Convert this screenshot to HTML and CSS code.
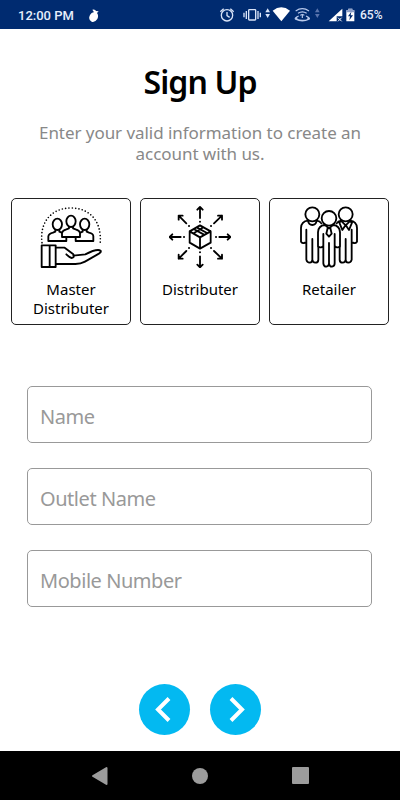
FILE: index.html
```html
<!DOCTYPE html>
<html lang="en">
<head>
    <meta charset="UTF-8">
    <meta name="viewport" content="width=device-width, initial-scale=1.0">
    <title>Sign Up</title>
    <link rel="stylesheet" href="styles.css">
</head>
<body>
<header class="status-bar">
    <span class="time">12:00 PM</span>
    <svg class="app-icon" width="12" height="15" viewBox="264 22 36 45">
        <path d="M270 43q5-9 12-8l-5-8q9-2 11 4l8 1-5 5q6 8 1 18-7 11-17 8-12-6-5-20z" fill="#fff"/>
    </svg>
    <svg class="status-icons" width="143" height="20" viewBox="20 15 429 60">
        <g fill="none" stroke="#d9e4f8" stroke-width="4">
            <circle cx="50" cy="46" r="17"/>
            <path d="M50 36v11l8 5M30 35l10-9M70 35l-10-9"/>
            <rect x="115" y="29" width="21" height="31" rx="2"/>
            <path d="M108 33v24M101 38v14M143 33v24M150 38v14"/>
        </g>
        <path d="M172 25l7 12h-14zM172 54l7-12h-14z" fill="#d9e4f8"/>
        <path d="M187 32q26-20 52 0l-26 32z" fill="#fff"/>
        <g fill="none" stroke="#b9caec" stroke-width="3.5">
            <path d="M256 33q20-14 40 0M263 40q13-9 26 0M270 46q6-5 12 0M276 45v9M265 48q-14 6-9 10 20 9 40 0 5-4-9-10M259 52q-3 8 17 9t17-9"/>
        </g>
        <path d="M321 25l7 12h-14zM321 54l7-12h-14z" fill="#5873ac"/>
        <path d="M396 26v23h-17v15h-24z" fill="#fff"/>
        <path d="M383 53l11 11M394 53l-11 11" stroke="#fff" stroke-width="3"/>
        <path d="M408 31h6v-5h12v5h6v33h-24z" fill="#fff"/>
        <path d="M408 31h6v-5h12v5h6v6h-24z" fill="#8c9fc8"/>
        <path d="M423 35l-10 14h6l-2 12 11-15h-7z" fill="#002b70"/>
    </svg>
    <span class="battery">65%</span>
</header>

<main class="content">
    <h1>Sign Up</h1>
    <p class="subtitle">Enter your valid information to create an<br>account with us.</p>

    <div class="roles">
        <button class="role">
            <svg width="62" height="62" viewBox="105 49 186 186">
                <path class="dots" d="M111 159C103 96 141 55 198 55S293 96 285 166"/>
                <g class="line">
                    <path d="M130 154v-14q1-8 14-11l7-3v-8h12v8l7 3q14 3 14 11v14z"/>
                    <path d="M212 154v-14q1-8 14-11l7-3v-8h12v8l7 3q13 3 13 11v14z"/>
                    <ellipse class="fill" cx="157" cy="104" rx="14" ry="17"/>
                    <ellipse class="fill" cx="239" cy="104" rx="14" ry="17"/>
                    <path class="fill" d="M171 142v-12q1-8 13-11l8-3v-8h12v8l8 3q12 3 13 11v12z"/>
                    <ellipse class="fill" cx="198" cy="95" rx="14" ry="17"/>
                    <path d="M110 167h42v65h-42zM134 168v63M152 174h27l26 20q5 10-5 11-6-1-16-11M205 198l36-4q35-18 46-11 2 4-4 8l-43 25q-14 8-33 7h-55"/>
                </g>
            </svg>
            <span>Master<br>Distributer</span>
        </button>
        <button class="role">
            <svg width="62" height="62" viewBox="104 50 186 186">
                <g class="line">
                    <path d="M197 108l32 18v34l-32 18-31-18v-34zM166 126l31 18 32-18M197 144v34M178 119l31 17M187 114l31 17M178 133v-1l29-18"/>
                    <path d="M197 86V53M189 61l8-8 8 8M197 201v33M189 226l8 8 8-8M139 143h-33M114 135l-8 8 8 8M255 143h33M280 135l8 8-8 8"/>
                    <path d="M156 102l-23-23M133 91V79h12M239 102l24-23M251 79h12v12M156 185l-23 23M133 196v12h12M239 185l24 23M251 208h12v-12"/>
                </g>
                <path class="points" d="M197 97v.1M197 189v.1M149 143h.1M245 143h.1M164 110h.1M230 110h.1M164 176h.1M230 176h.1"/>
            </svg>
            <span>Distributer</span>
        </button>
        <button class="role">
            <svg width="62" height="62" viewBox="107 50 186 186">
                <g class="line">
                    <circle cx="150" cy="75" r="21"/>
                    <circle cx="250" cy="75" r="21"/>
                    <path d="M137 94q-20 2-21 22v41q5 7 12 3M132 121v90q2 9 10 9 8-1 8-9v-62M150 211q1 9 9 9 9 0 9-9v-38M137 94q2 13 13 13t13-13q10 1 14 8"/>
                    <path d="M263 94q20 2 21 22v41q-5 7-12 3M268 121v90q-2 9-10 9-8-1-8-9v-62M250 211q-1 9-9 9-9 0-9-9v-38M237 94q-10 1-14 8M238 94l-7 6 9 22 10-15 10 15 9-22-8-6M238 96l12 12 12-12"/>
                    <circle class="fill" cx="200" cy="87" r="22"/>
                    <path d="M187 107q-19 2-20 22v42q6 6 13 1M183 134v88q1 10 9 10 8-1 8-10v-61M200 222q1 10 9 10 8-1 8-10v-88M213 107q19 2 20 22v42q-6 6-13 1M188 107l12 10 12-10M196 116l-4 17 8 9 8-9-4-17"/>
                </g>
            </svg>
            <span>Retailer</span>
        </button>
    </div>

    <form class="form">
        <input type="text" placeholder="Name">
        <input type="text" placeholder="Outlet Name">
        <input type="text" placeholder="Mobile Number">
    </form>

    <div class="actions">
        <button class="arrow" aria-label="Back">
            <svg width="51" height="51" viewBox="0 0 51 51"><path d="M30 14.5L19 25.5l11 11"/></svg>
        </button>
        <button class="arrow" aria-label="Next">
            <svg width="51" height="51" viewBox="0 0 51 51"><path d="M21 14.5l11 11-11 11"/></svg>
        </button>
    </div>
</main>

<footer class="nav-bar">
    <svg width="17" height="20" viewBox="0 0 17 20"><path d="M15.5 2v16L2 10z" stroke="#9c9c9c" stroke-width="2" stroke-linejoin="round"/></svg>
    <svg width="16" height="16" viewBox="0 0 16 16"><circle cx="8" cy="8" r="8"/></svg>
    <svg width="17" height="17" viewBox="0 0 17 17"><rect width="17" height="17" rx="1"/></svg>
</footer>
</body>
</html>
```
FILE: styles.css
```css
* {
    box-sizing: border-box;
}

body {
    font-family: "Noto Sans", sans-serif;
    background: #fff;
    display: flex;
    flex-direction: column;
    height: 100vh;
    margin: 0;
    overflow: hidden;
}

.status-bar {
    display: flex;
    align-items: center;
    height: 29px;
    padding: 1px 18px 0 18px;
    background: #002b70;
    color: #e6eefc;
    font-family: Roboto, sans-serif;
    font-size: 13px;
    font-weight: 500;
}

.time {
    width: 70px;
    white-space: nowrap;
}

.status-icons {
    margin-left: auto;
}

.battery {
    width: 22px;
    font-size: 12px;
    text-align: right;
    white-space: nowrap;
}

.content {
    flex: 1;
    display: flex;
    flex-direction: column;
}

h1 {
    margin: 32px 0 0;
    color: #000;
    font-size: 32px;
    font-weight: 600;
    line-height: 42px;
    letter-spacing: -0.9px;
    text-align: center;
}

.subtitle {
    margin: 19px 0 0;
    color: #888;
    font-size: 17px;
    line-height: 21px;
    letter-spacing: -0.05px;
    text-align: center;
    white-space: nowrap;
}

.roles {
    display: flex;
    gap: 9px;
    margin: 34px 11px 0;
}

.role {
    display: flex;
    flex-direction: column;
    align-items: center;
    flex: 1;
    height: 127px;
    padding: 7px 0 0;
    background: #fff;
    border: 1px solid #222;
    border-radius: 5px;
    color: #000;
    font-family: inherit;
    font-size: 15px;
    line-height: 19px;
}

.role span {
    margin-top: 12px;
}

.line {
    fill: none;
    stroke: #000;
    stroke-width: 5.5;
    stroke-linecap: round;
    stroke-linejoin: round;
}

.fill {
    fill: #fff;
}

.dots {
    fill: none;
    stroke: #000;
    stroke-width: 5;
    stroke-linecap: round;
    stroke-dasharray: 0 10;
}

.points {
    stroke: #000;
    stroke-width: 6;
    stroke-linecap: round;
}

.form {
    display: flex;
    flex-direction: column;
    gap: 25px;
    margin: 61px 28px 0 27px;
}

input {
    width: 100%;
    height: 57px;
    padding: 4px 12px 0;
    border: 1px solid #999;
    border-radius: 5px;
    font-family: inherit;
    font-size: 20px;
    letter-spacing: -0.45px;
}

input::placeholder {
    color: #999;
    opacity: 1;
}

.actions {
    display: flex;
    justify-content: center;
    gap: 20px;
    margin-top: 77px;
}

.arrow {
    width: 51px;
    height: 51px;
    padding: 0;
    background: #03b9f1;
    border: none;
    border-radius: 50%;
}

.arrow svg {
    display: block;
    fill: none;
    stroke: #fff;
    stroke-width: 4;
}

.nav-bar {
    display: flex;
    align-items: center;
    justify-content: space-between;
    height: 49px;
    padding: 0 91px 0 91px;
    background: #000;
    fill: #9c9c9c;
}
```
